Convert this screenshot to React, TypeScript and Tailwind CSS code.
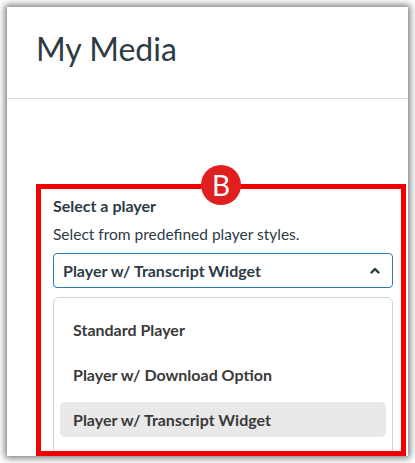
import type { ReactNode } from "react";

const OPTIONS = ["Standard Player", "Player w/ Download Option", "Player w/ Transcript Widget"];
const SELECTED = "Player w/ Transcript Widget";

function Badge({ children }: { children: ReactNode }) {
  return (
    <div className="absolute left-1/2 top-[-24px] z-10 flex h-[40px] w-[40px] -translate-x-1/2 items-center justify-center rounded-full bg-[#e0201f] text-[28px] leading-none text-white">
      {children}
    </div>
  );
}

export default function App() {
  return (
    <div
      className="h-[463px] w-[415px] bg-white p-[7px] pb-[7px]"
      style={{ fontFamily: "Lato, 'Noto Sans', sans-serif" }}
    >
      <div className="flex h-[449px] flex-col bg-white shadow-[0_0_7px_2px_rgba(0,0,0,0.55)]">
        {/* Header */}
        <div className="h-[92px] shrink-0 border-b border-[#d7dbe0] px-[29px] pt-[23px]">
          <h1 className="text-[32px] leading-[38px] text-[#2d3b45]">My Media</h1>
        </div>

        {/* Highlighted region */}
        <div className="relative ml-[29px] mr-[2px] mt-[85px] h-[272px] shrink-0 border-[5px] border-[#f00000]">
          <Badge>B</Badge>
          <div className="h-full overflow-hidden pl-[12px] pr-[8px] pt-[7px]">
            <p className="text-[16px] font-bold leading-[20px] text-[#2d3b45]">Select a player</p>
            <p className="mt-[8px] text-[15.5px] leading-[20px] text-[#2d3b45]">Select from predefined player styles.</p>

            <div className="mt-[9px] flex h-[35px] items-center justify-between rounded-[4px] border border-[#2b7abc] pl-[9px] pr-[12px]">
              <span className="text-[16px] font-bold text-[#2d3b45]">{SELECTED}</span>
              <svg width="10" height="7" viewBox="0 0 10 7" className="text-[#2d3b45]">
                <polyline points="1.5,5.5 5,2 8.5,5.5" fill="none" stroke="currentColor" strokeWidth="2.4" strokeLinecap="round" strokeLinejoin="round" />
              </svg>
            </div>

            <div className="mt-[9px] rounded-[6px] border border-[#d3d3d3] bg-white px-[6px] pt-[14px] pb-[14px]">
              {OPTIONS.map((o) => (
                <div
                  key={o}
                  className={[
                    "mb-[10px] flex h-[35px] items-center rounded-[5px] px-[13px] text-[16px] font-bold text-[#3a3a3a]",
                    o === SELECTED ? "bg-[#e9e9e9]" : "",
                  ].join(" ")}
                >
                  {o}
                </div>
              ))}
            </div>
          </div>
        </div>
      </div>
    </div>
  );
}
